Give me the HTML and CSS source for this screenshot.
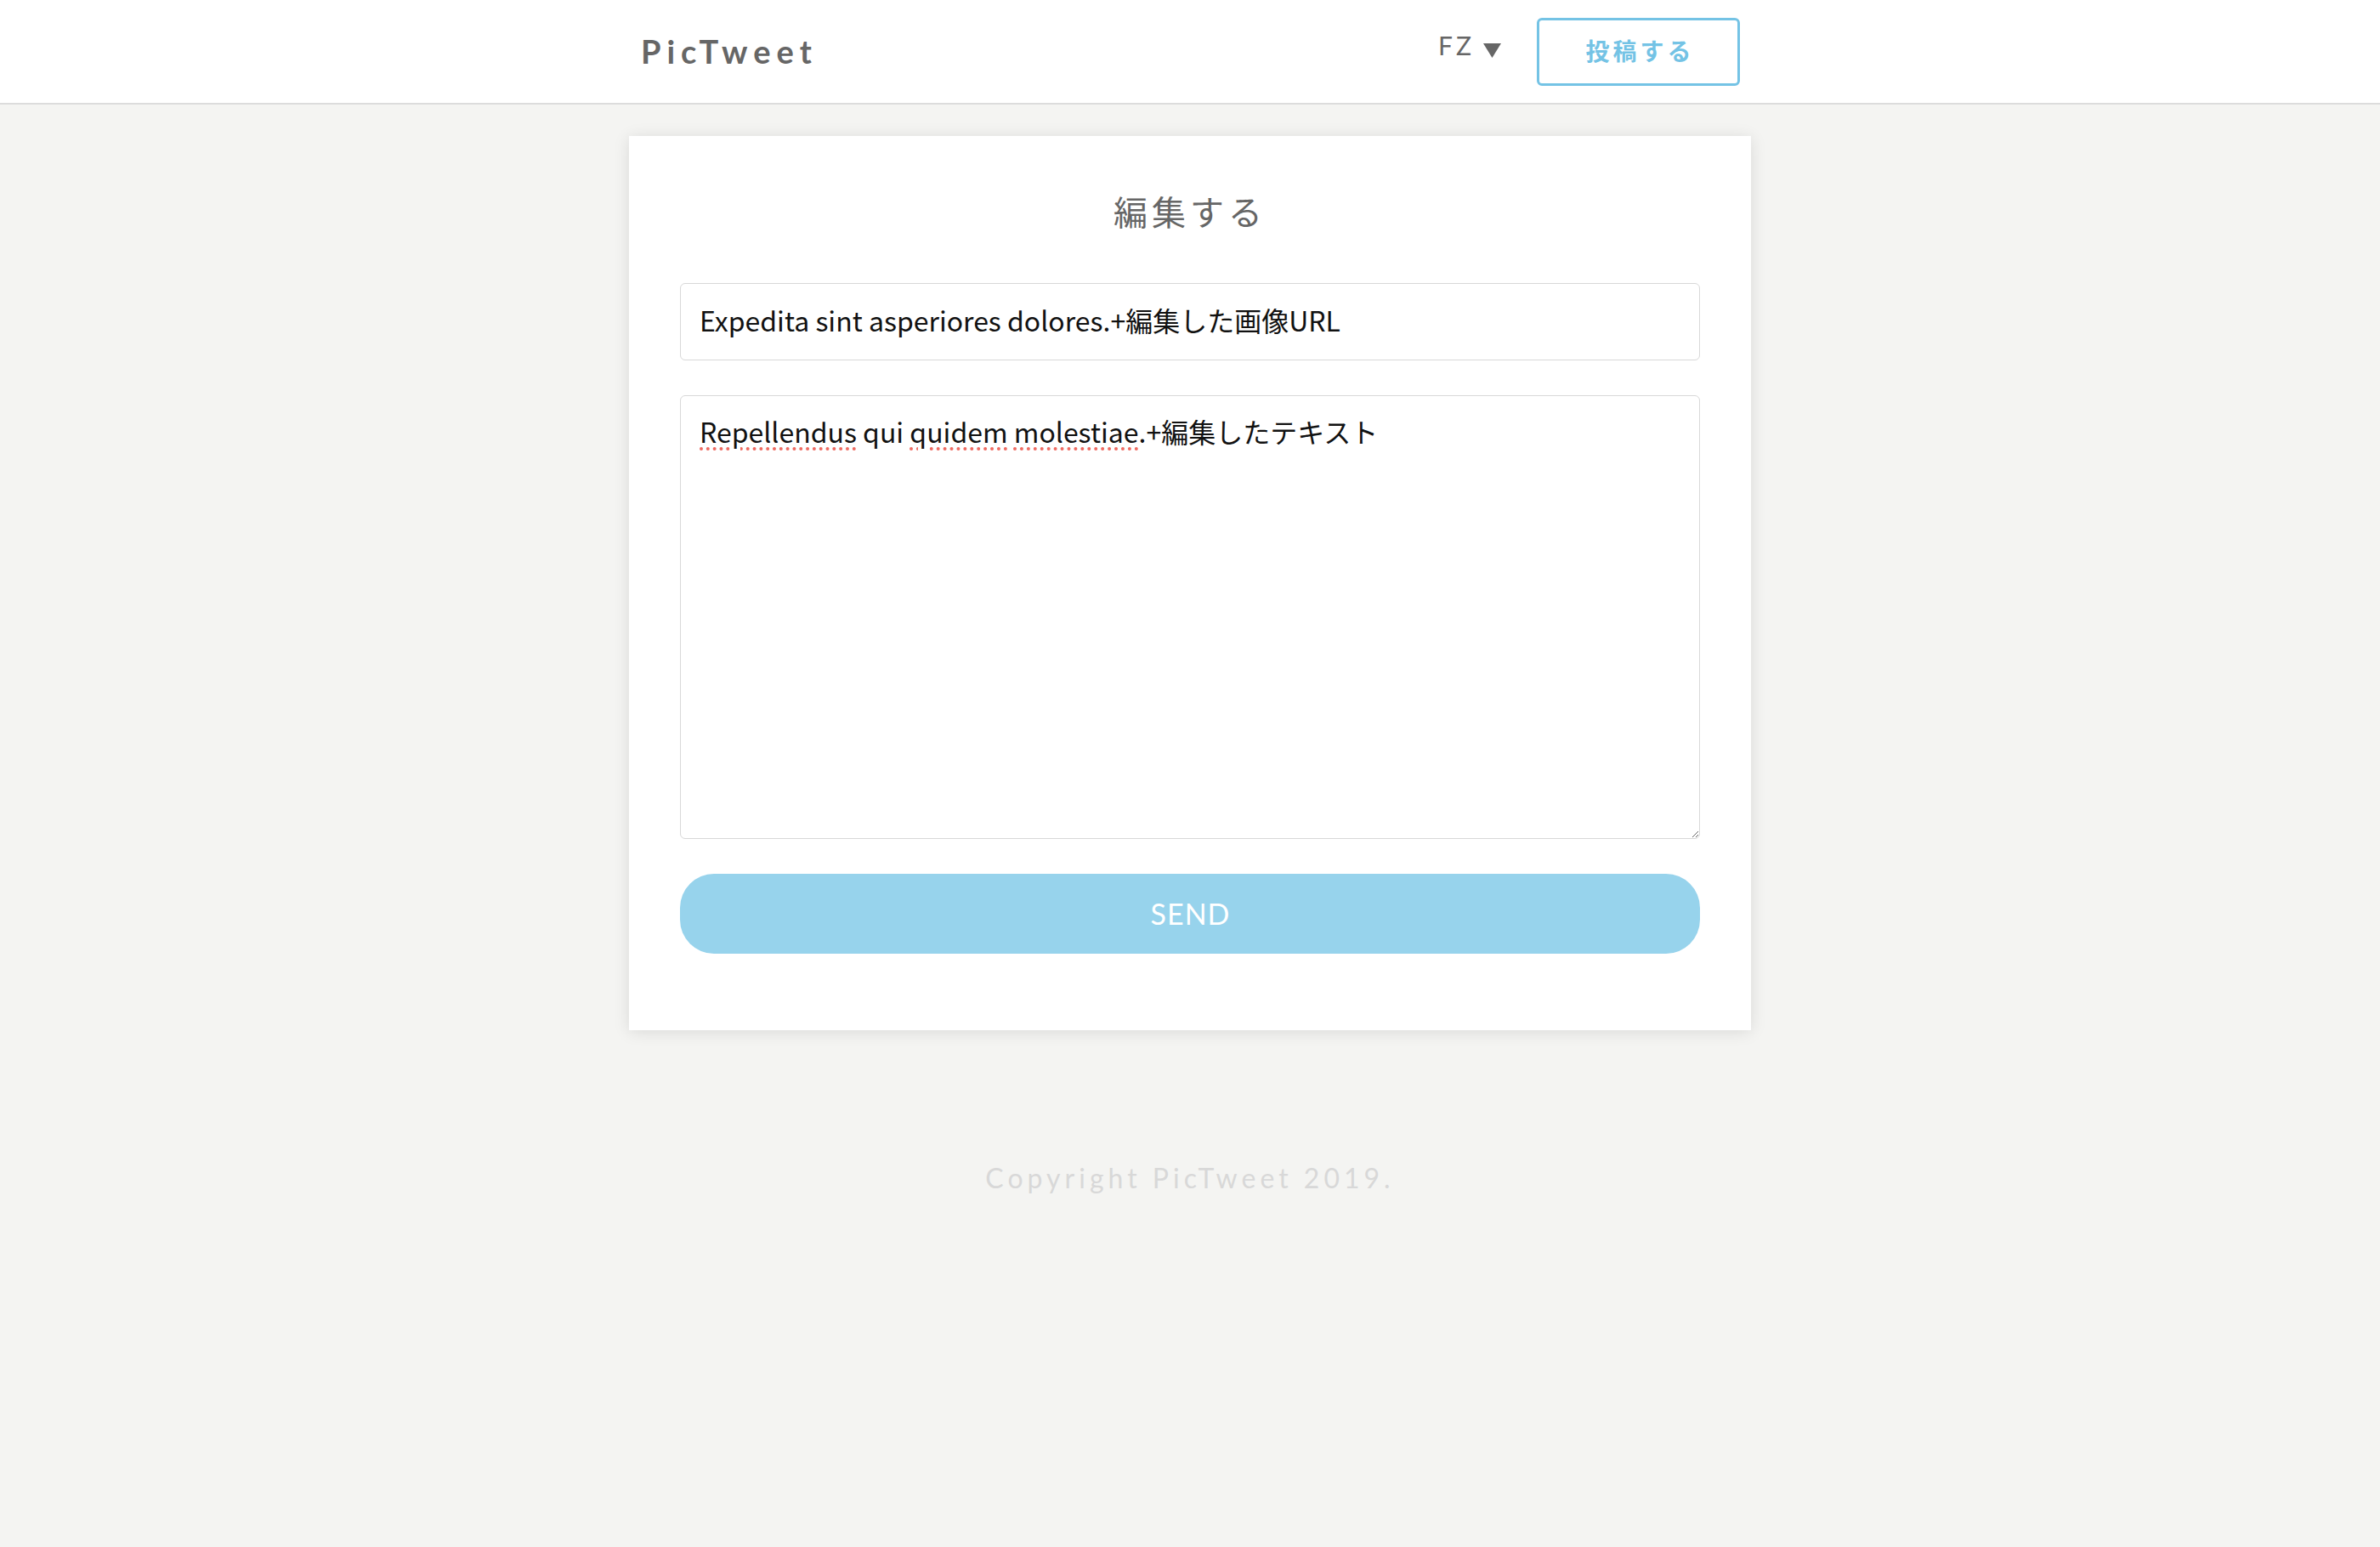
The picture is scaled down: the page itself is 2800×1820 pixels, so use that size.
FILE: index.html
```html
<!DOCTYPE html>
<html lang="ja">
<head>
<meta charset="utf-8">
<title>PicTweet</title>
<link rel="stylesheet" href="styles.css">
</head>
<body>
<header class="site-header">
  <div class="header-inner">
    <a class="logo" href="#">PicTweet</a>
    <nav class="header-nav">
      <span class="user-menu">FZ<svg class="caret" width="21" height="17" viewBox="0 0 21 17"><polygon points="0,0 21,0 10.5,17" fill="#666"/></svg></span>
      <a class="post-btn" href="#">投稿する</a>
    </nav>
  </div>
</header>
<main class="main">
  <section class="card">
    <h2 class="card-title">編集する</h2>
    <form class="edit-form">
      <input class="field field-input" type="text" value="Expedita sint asperiores dolores.+編集した画像URL">
      <div class="field field-textarea" contenteditable="true" spellcheck="false"><span class="typo">Repellendus</span> qui <span class="typo">quidem</span> <span class="typo">molestiae</span>.+編集したテキスト</div>
      <button class="send-btn" type="button">SEND</button>
    </form>
  </section>
</main>
<footer class="site-footer">Copyright PicTweet 2019.</footer>
</body>
</html>
```

FILE: styles.css
```css
* { box-sizing: border-box; }

html, body {
  margin: 0;
  padding: 0;
}

body {
  background: #f4f4f2;
  min-height: 1820px;
  font-family: Lato, "Noto Sans CJK JP", sans-serif;
  color: #666;
}

.site-header {
  background: #fff;
  height: 123px;
  border-bottom: 2px solid #dcdcdc;
}

.header-inner {
  width: 1320px;
  height: 121px;
  margin: 0 auto;
  padding: 0 13px 0 14px;
  display: flex;
  align-items: center;
  justify-content: space-between;
}

.logo {
  font-family: Lato, sans-serif;
  font-weight: 700;
  font-size: 38px;
  letter-spacing: 7px;
  color: #666;
  text-decoration: none;
  margin-bottom: 2px;
}

.header-nav {
  display: flex;
  align-items: center;
  gap: 42px;
}

.user-menu {
  display: flex;
  align-items: flex-end;
  gap: 10px;
  font-family: Lato, sans-serif;
  font-weight: 400;
  font-size: 30px;
  letter-spacing: 4px;
  color: #666;
  line-height: 1;
  margin-bottom: 16px;
}

.caret {
  display: block;
}

.post-btn {
  display: flex;
  align-items: center;
  justify-content: center;
  width: 239px;
  height: 80px;
  border: 3px solid #74c3e5;
  border-radius: 6px;
  font-family: "Noto Sans CJK JP", sans-serif;
  font-weight: 700;
  font-size: 28px;
  letter-spacing: 4px;
  color: #74c3e5;
  text-decoration: none;
  padding: 0 0 4px 4px;
}

.main {
  padding-top: 37px;
}

.card {
  width: 1320px;
  margin: 0 auto;
  background: #fff;
  padding: 60px 60px 90px;
  box-shadow: 0 2px 18px rgba(0, 0, 0, 0.11);
}

.card-title {
  margin: 0 0 57px;
  text-align: center;
  font-family: "Noto Sans CJK JP", sans-serif;
  font-weight: 400;
  font-size: 40px;
  line-height: 56px;
  letter-spacing: 5px;
  color: #666;
}

.edit-form {
  display: flex;
  flex-direction: column;
}

.field {
  width: 100%;
  border: 1px solid #d8d8d8;
  border-radius: 6px;
  background: #fff;
  font-family: "Noto Sans CJK JP", sans-serif;
  font-size: 32px;
  color: #111;
  outline: none;
  margin: 0 0 41px;
}

.field-input {
  height: 91px;
  padding: 0 22px 5px;
}

.field-textarea {
  height: 522px;
  padding: 18px 22px 14px;
  line-height: 46px;
  overflow: auto;
  resize: vertical;
}

.typo {
  text-decoration: underline dotted #ee6b62;
  text-decoration-thickness: 4px;
  text-underline-offset: 5px;
}

.send-btn {
  width: 100%;
  height: 94px;
  border: none;
  border-radius: 40px;
  background: #97d3ec;
  color: #fff;
  font-family: Lato, sans-serif;
  font-size: 34px;
  letter-spacing: 1px;
  padding: 0 0 2px 1px;
  cursor: pointer;
}

.site-footer {
  padding-top: 154px;
  text-align: center;
  font-family: Lato, sans-serif;
  font-size: 32px;
  line-height: 40px;
  letter-spacing: 5px;
  color: #d8d8d8;
}
```
